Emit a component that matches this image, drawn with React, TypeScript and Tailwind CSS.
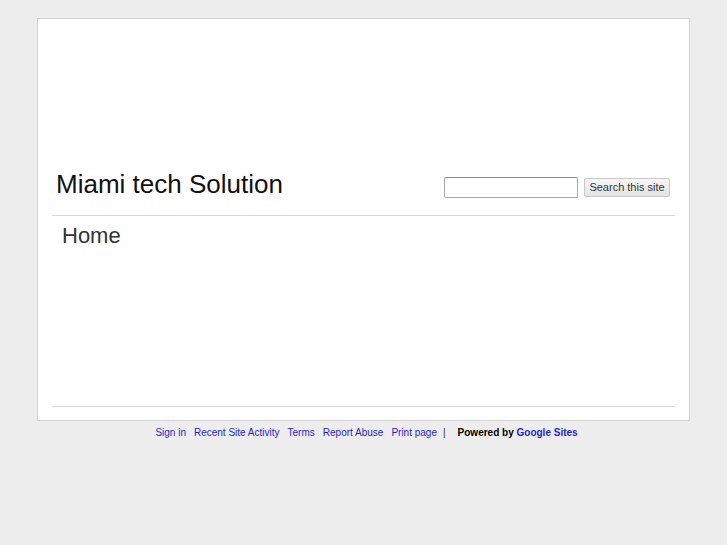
const footerLinks = ["Sign in", "Recent Site Activity", "Terms", "Report Abuse", "Print page"];

const App = () => {
  return (
    <div className="min-h-[545px] bg-[#ededed] pt-[18px] font-['Liberation_Sans',Arial,sans-serif]">
      <div className="mx-auto flex h-[403px] w-[653px] flex-col border border-[#d4d4d4] bg-white px-[14px]">
        {/* Header */}
        <div className="flex items-start justify-between border-b border-[#d6d6d6] pb-[16px] pr-[5px] pt-[150px]">
          <h1 className="ml-[4px] text-[26px] leading-[30px] text-[#111]">Miami tech Solution</h1>
          <div className="mt-[8px] flex items-start gap-[6px]">
            <input
              type="text"
              className="h-[21px] w-[134px] rounded-[2px] border border-[#a8a8a8] border-t-[#8c8c8c] bg-white outline-none"
            />
            <button className="mt-[1px] h-[19px] w-[86px] rounded-[2px] border border-[#c8c8c8] bg-gradient-to-b from-[#f7f7f7] to-[#e4e4e4] text-[11px] leading-[17px] text-[#333]">
              Search this site
            </button>
          </div>
        </div>

        {/* Content */}
        <div className="flex-1 pl-[10px] pt-[7px]">
          <h2 className="text-[22px] leading-[26px] text-[#333]">Home</h2>
        </div>

        <div className="mb-[13px] border-b border-[#d6d6d6]" />
      </div>

      {/* Footer */}
      <div className="mt-[5px] flex justify-center pl-[6px] text-[10px] leading-[14px]">
        {footerLinks.map((label) => (
          <a key={label} href="#" className="mr-[8px] text-[#1f1fcc]">
            {label}
          </a>
        ))}
        <span className="-ml-[2px] mr-[12px] text-[#333]">|</span>
        <span className="font-bold text-black">
          Powered by <a href="#" className="text-[#1f1fcc]">Google Sites</a>
        </span>
      </div>
    </div>
  );
};

export default App;
